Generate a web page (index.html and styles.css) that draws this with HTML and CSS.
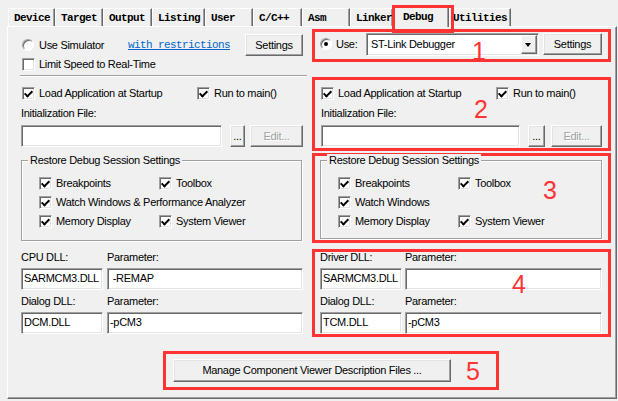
FILE: index.html
```html
<!DOCTYPE html>
<html lang="en">
<head>
<meta charset="utf-8">
<title>Options for Target - Debug</title>
<link rel="stylesheet" href="styles.css">
</head>
<body>
<div class="win">
  <div class="tabs">
    <div class="tab">Device</div>
    <div class="tab">Target</div>
    <div class="tab">Output</div>
    <div class="tab">Listing</div>
    <div class="tab">User</div>
    <div class="tab">C/C++</div>
    <div class="tab">Asm</div>
    <div class="tab">Linker</div>
    <div class="tab sel">Debug</div>
    <div class="tab util">Utilities</div>
  </div>
  <div class="panel">
    <div class="cols">
      <div class="left">
        <div class="sim">
          <span class="radio"></span>
          <span>Use Simulator</span>
          <span class="link">with restrictions</span>
          <button class="btn">Settings</button>
        </div>
        <div class="chk lim"><span class="cb"></span>Limit Speed to Real-Time</div>
        <div class="sep"></div>
        <div class="loadrow">
          <span class="chk"><span class="cb on"></span>Load Application at Startup</span>
          <span class="chk"><span class="cb on"></span>Run to main()</span>
        </div>
        <div class="init">Initialization File:</div>
        <div class="filerow">
          <span class="field f-init"></span>
          <button class="btn dots">...</button>
          <button class="btn dis edit">Edit...</button>
        </div>
        <div class="group">
          <span class="legend">Restore Debug Session Settings</span>
          <div class="grows">
            <span class="chk"><span class="cb on"></span>Breakpoints</span>
            <span class="chk"><span class="cb on"></span>Toolbox</span>
            <span class="chk span2"><span class="cb on"></span>Watch Windows &amp; Performance Analyzer</span>
            <span class="chk"><span class="cb on"></span>Memory Display</span>
            <span class="chk"><span class="cb on"></span>System Viewer</span>
          </div>
        </div>
        <div class="dll">
          <span>CPU DLL:</span><span>Parameter:</span>
          <span class="field">SARMCM3.DLL</span><span class="field"> -REMAP</span>
          <span>Dialog DLL:</span><span>Parameter:</span>
          <span class="field">DCM.DLL</span><span class="field">-pCM3</span>
        </div>
      </div>

      <div class="right">
        <div class="rbox b1">
          <span class="radio on"></span>
          <span class="uselbl">Use:</span>
          <div class="combo"><span class="ctext">ST-Link Debugger</span><span class="arrow"></span></div>
          <button class="btn">Settings</button>
          <span class="num n1">1</span>
        </div>
        <div class="rbox b2">
          <div class="loadrow">
            <span class="chk"><span class="cb on"></span>Load Application at Startup</span>
            <span class="chk"><span class="cb on"></span>Run to main()</span>
          </div>
          <div class="init">Initialization File:</div>
          <div class="filerow">
            <span class="field f-init"></span>
            <button class="btn dots">...</button>
            <button class="btn dis edit">Edit...</button>
          </div>
          <span class="num n2">2</span>
        </div>
        <div class="rbox b3">
          <div class="group">
            <span class="legend">Restore Debug Session Settings</span>
            <div class="grows">
              <span class="chk"><span class="cb on"></span>Breakpoints</span>
              <span class="chk"><span class="cb on"></span>Toolbox</span>
              <span class="chk span2"><span class="cb on"></span>Watch Windows</span>
              <span class="chk"><span class="cb on"></span>Memory Display</span>
              <span class="chk"><span class="cb on"></span>System Viewer</span>
            </div>
          </div>
          <span class="num n3">3</span>
        </div>
        <div class="rbox b4">
          <div class="dll">
            <span>Driver DLL:</span><span>Parameter:</span>
            <span class="field">SARMCM3.DLL</span><span class="field"></span>
            <span>Dialog DLL:</span><span>Parameter:</span>
            <span class="field">TCM.DLL</span><span class="field">-pCM3</span>
          </div>
          <span class="num n4">4</span>
        </div>
      </div>
    </div>

    <div class="bottom">
      <div class="rbox b5">
        <button class="btn manage">Manage Component Viewer Description Files ...</button>
        <span class="num n5">5</span>
      </div>
    </div>
  </div>
</div>
</body>
</html>
```

FILE: styles.css
```css
* { box-sizing: border-box; margin: 0; padding: 0; }
html, body { background: #f0f0f0; }
body {
  margin: 0;
  font-family: "Liberation Sans", Arial, sans-serif;
  font-size: 11px;
  line-height: 13px;
  letter-spacing: -0.3px;
  color: #000;
}
.win { width: 618px; height: 401px; overflow: hidden; position: relative; }

/* ---------- tabs ---------- */
.tabs {
  display: grid;
  grid-template-columns: 47px 48px 49px 53px 48px 49px 48px 43px 56px 62px;
  height: 26px;
  padding: 8px 0 0 8px;
  position: relative;
  z-index: 2;
}
.tab {
  height: 18px;
  padding: 3px 0 0 5px;
  font-family: "Liberation Mono", "Courier New", monospace;
  font-weight: bold;
  font-size: 11px;
  letter-spacing: -0.6px;
  line-height: 13px;
  border-top: 1px solid #fff;
  border-left: 1px solid #fff;
  border-right: 1px solid #696969;
  box-shadow: inset -1px 0 #a0a0a0;
  white-space: nowrap;
}
.tab.sel {
  height: 21px;
  margin-top: -2px;
  padding: 4px 0 0 9px;
  background: #f0f0f0;
  position: relative;
}
.tab.sel::after {
  content: "";
  position: absolute;
  left: -2px;
  top: -2px;
  width: 56px;
  height: 22px;
  border: 3px solid #f33;
}
.tab.util { padding-left: 3px; }

/* ---------- panel ---------- */
.panel {
  width: 610px;
  height: 373px;
  margin-left: 7px;
  border: 1px solid;
  border-color: #fff #696969 #696969 #fff;
  box-shadow: inset -1px -1px #a0a0a0;
  padding: 2px 5px 0 13px;
}
.cols {
  display: grid;
  grid-template-columns: 282px 299px;
  column-gap: 9px;
  align-items: start;
}
.left { padding-top: 5px; display: flex; flex-direction: column; }
.right { display: flex; flex-direction: column; }

/* ---------- controls ---------- */
.btn {
  font: inherit;
  letter-spacing: inherit;
  color: #000;
  background: #f0f0f0;
  border: 1px solid;
  border-color: #fff #696969 #696969 #fff;
  box-shadow: inset -1px -1px #a0a0a0, inset 1px 1px #e3e3e3;
  height: 22px;
  padding: 0;
  text-align: center;
  white-space: nowrap;
}
.btn.dis { color: #a0a0a0; text-shadow: 1px 1px #fff; }

.field {
  display: block;
  height: 22px;
  background: #fff;
  border: 1px solid;
  border-color: #a0a0a0 #fff #fff #a0a0a0;
  box-shadow: inset 1px 1px #696969, inset -1px -1px #e3e3e3;
  padding: 2px 0 0 2px;
  line-height: 14px;
  white-space: pre;
  overflow: hidden;
}

.radio {
  display: block;
  width: 12px;
  height: 12px;
  border-radius: 50%;
  background: #fff;
  border: 1px solid;
  border-color: #a0a0a0 #fff #fff #a0a0a0;
  box-shadow: inset 1px 1px #696969;
  position: relative;
}
.radio.on::after {
  content: "";
  position: absolute;
  left: 3px;
  top: 3px;
  width: 4px;
  height: 4px;
  border-radius: 50%;
  background: #000;
}

.chk { display: flex; align-items: center; gap: 4px; height: 13px; white-space: nowrap; }
.cb {
  flex: none;
  width: 13px;
  height: 13px;
  background: #fff;
  border: 1px solid;
  border-color: #a0a0a0 #fff #fff #a0a0a0;
  box-shadow: inset 1px 1px #696969, inset -1px -1px #e3e3e3;
  position: relative;
}
.cb.on::after {
  content: "";
  position: absolute;
  left: 3px;
  top: 1px;
  width: 3px;
  height: 6px;
  border: solid #000;
  border-width: 0 2px 2px 0;
  transform: rotate(45deg);
}

.link {
  font-family: "Liberation Mono", "Courier New", monospace;
  font-size: 11px;
  letter-spacing: -0.6px;
  color: #0066cc;
  text-decoration: underline;
  white-space: nowrap;
}

/* ---------- left column ---------- */
.sim {
  display: grid;
  grid-template-columns: 18px 89px 1fr 58px;
  align-items: center;
  height: 22px;
}
.sim .radio { margin-left: 1px; }
.lim { margin: 2px 0 0 1px; }
.sep {
  margin: 4px -4px 0 -1px;
  height: 2px;
  border-top: 1px solid #a0a0a0;
  border-bottom: 1px solid #fff;
}
.loadrow { margin-top: 10px; display: grid; grid-template-columns: 176px 1fr; }
.left .loadrow .chk:first-child { margin-left: 1px; }
.init { margin-top: 7px; }
.filerow { margin-top: 5px; display: flex; height: 22px; }
.f-init { width: 201px; }
.dots { width: 15px; margin-left: 8px; }
.edit { width: 53px; margin-left: 5px; }

.group {
  margin-top: 13px;
  height: 81px;
  border: 1px solid #a0a0a0;
  box-shadow: inset 1px 1px #fff, 1px 1px #fff;
  padding: 0 0 0 17px;
  display: flex;
  flex-direction: column;
}
.left .group { width: 281px; }
.legend {
  align-self: flex-start;
  margin: -7px 0 0 -11px;
  padding: 0 2px;
  background: #f0f0f0;
  white-space: nowrap;
}
.grows {
  margin-top: 10px;
  display: grid;
  grid-template-columns: 120px 1fr;
  row-gap: 6px;
}
.span2 { grid-column: 1 / -1; }

.dll {
  margin-top: 10px;
  display: grid;
  grid-template-columns: 82px 1fr;
  grid-template-rows: 13px 26px 18px 26px;
  column-gap: 4px;
  align-items: end;
}

/* ---------- right column (annotated boxes) ---------- */
.rbox { border: 3px solid #f33; position: relative; }
.b1 {
  height: 33px;
  display: grid;
  grid-template-columns: 16px 30px 173px 63px;
  align-items: start;
  padding: 1px 0 0 5px;
}
.b1 .radio { margin-top: 5px; }
.uselbl { margin-top: 5px; }
.b1 .btn { width: 59px; margin-left: 4px; }
.combo {
  height: 23px;
  display: flex;
  background: #fff;
  border: 1px solid;
  border-color: #a0a0a0 #fff #fff #a0a0a0;
  box-shadow: inset 1px 1px #696969, inset -1px -1px #e3e3e3;
  padding: 1px;
}
.ctext { flex: 1; padding: 3px 0 0 3px; white-space: nowrap; }
.arrow {
  width: 16px;
  height: 19px;
  border: 1px solid;
  border-color: #fff #696969 #696969 #fff;
  box-shadow: inset -1px -1px #a0a0a0;
  background: #f0f0f0;
  position: relative;
}
.arrow::after {
  content: "";
  position: absolute;
  left: 3px;
  top: 7px;
  border-style: solid;
  border-width: 4px 3.5px 0;
  border-color: #000 transparent transparent;
}

.b2 { margin-top: 15px; height: 74px; padding: 0 0 0 6px; }
.b2 .loadrow { margin-top: 7px; grid-template-columns: 175px 1fr; }
.b2 .f-init { width: 199px; }
.b2 .dots { width: 17px; margin-left: 8px; }
.b2 .edit { width: 51px; margin-left: 6px; }

.b3 { margin-top: 2px; height: 90px; padding: 4px 6px 0 5px; }
.b3 .group { margin-top: 0; height: 79px; }

.b4 { margin-top: 6px; height: 88px; padding: 0 6px 0 5px; }
.b4 .dll { margin-top: -1px; column-gap: 3px; }

/* ---------- bottom ---------- */
.bottom { margin: 14px 0 0 142px; }
.b5 { width: 336px; height: 39px; padding: 5px 0 0 7px; }
.manage { width: 278px; height: 23px; }

/* ---------- annotation numbers ---------- */
.num {
  position: absolute;
  font-family: "Liberation Sans", Arial, sans-serif;
  font-size: 25px;
  line-height: 25px;
  letter-spacing: 0;
  color: #f33;
}
.n1 { left: 157px; top: 7px; }
.n2 { left: 159px; top: 17px; }
.n3 { left: 228px; top: 22px; }
.n4 { left: 197px; top: 20px; }
.n5 { left: 300px; top: 5px; }
```
